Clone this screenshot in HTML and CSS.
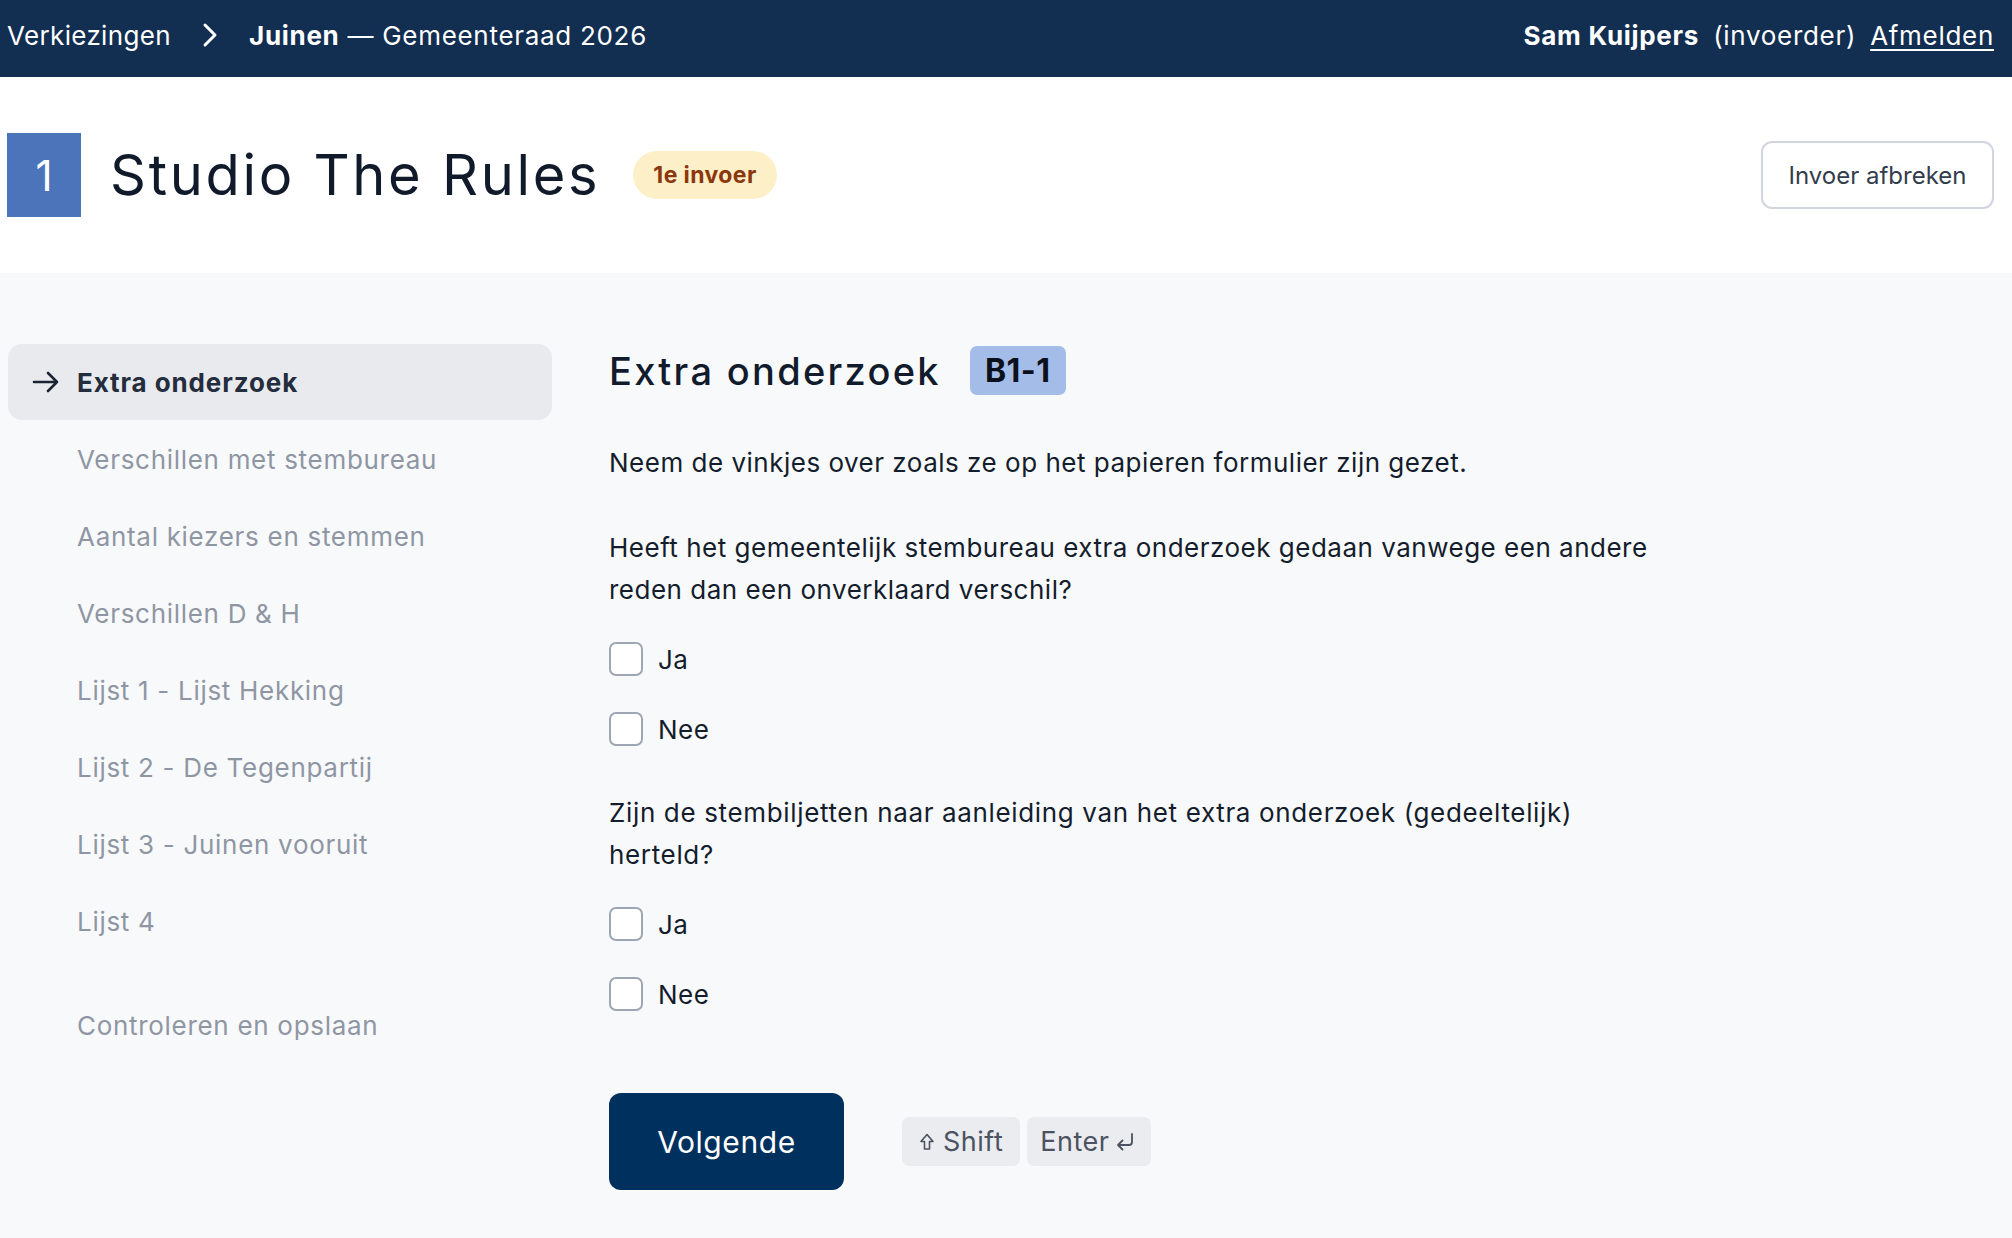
FILE: index.html
```html
<!DOCTYPE html>
<html lang="nl">
<head>
<meta charset="utf-8">
<title>Extra onderzoek</title>
<link rel="stylesheet" href="styles.css">
</head>
<body>
<header class="topbar">
  <nav class="crumbs">
    <span class="crumb first">Verkiezingen</span>
    <svg class="chev" width="18" height="26" viewBox="0 0 18 26"><path d="M4 3 L14 13 L4 23" fill="none" stroke="#fff" stroke-width="3" stroke-linecap="round" stroke-linejoin="round"/></svg>
    <span class="crumb"><strong>Juinen</strong> — Gemeenteraad 2026</span>
  </nav>
  <div class="user">
    <strong>Sam Kuijpers</strong>
    <span class="role">(invoerder)</span>
    <a class="logout" href="#">Afmelden</a>
  </div>
</header>

<section class="titlebar">
  <div class="titleleft">
    <div class="num">1</div>
    <h1 class="title">Studio The Rules</h1>
    <span class="pill">1e invoer</span>
  </div>
  <button class="btn-outline">Invoer afbreken</button>
</section>

<main class="main">
  <aside class="side">
    <ul class="navlist">
      <li class="navitem active"><span class="ico"><svg width="28" height="22" viewBox="0 0 28 22"><path d="M2 11 H25 M16 2 L25 11 L16 20" fill="none" stroke="#1b2433" stroke-width="2.6" stroke-linecap="round" stroke-linejoin="round"/></svg></span>Extra onderzoek</li>
      <li class="navitem"><span class="ico"></span>Verschillen met stembureau</li>
      <li class="navitem"><span class="ico"></span>Aantal kiezers en stemmen</li>
      <li class="navitem"><span class="ico"></span>Verschillen D &amp; H</li>
      <li class="navitem"><span class="ico"></span>Lijst 1 - Lijst Hekking</li>
      <li class="navitem"><span class="ico"></span>Lijst 2 - De Tegenpartij</li>
      <li class="navitem"><span class="ico"></span>Lijst 3 - Juinen vooruit</li>
      <li class="navitem"><span class="ico"></span>Lijst 4</li>
      <li class="navitem final"><span class="ico"></span>Controleren en opslaan</li>
    </ul>
  </aside>

  <section class="content">
    <div class="heading">
      <h2 class="h2">Extra onderzoek</h2>
      <span class="code">B1-1</span>
    </div>
    <p class="intro">Neem de vinkjes over zoals ze op het papieren formulier zijn gezet.</p>

    <p class="question">Heeft het gemeentelijk stembureau extra onderzoek gedaan vanwege een andere<br>reden dan een onverklaard verschil?</p>
    <label class="check first"><span class="box"></span>Ja</label>
    <label class="check"><span class="box"></span>Nee</label>

    <p class="question q2">Zijn de stembiljetten naar aanleiding van het extra onderzoek (gedeeltelijk)<br>herteld?</p>
    <label class="check first"><span class="box"></span>Ja</label>
    <label class="check"><span class="box"></span>Nee</label>

    <div class="actions">
      <button class="btn-primary">Volgende</button>
      <div class="keys">
        <span class="kbd"><svg width="16" height="20" viewBox="0 0 16 20"><path d="M8 2.5 L14 9.5 H10.5 V17 H5.5 V9.5 H2 Z" fill="none" stroke="#4b5261" stroke-width="1.6" stroke-linejoin="round"/></svg>Shift</span>
        <span class="kbd enter">Enter<svg width="24" height="22" viewBox="0 0 24 22"><path d="M19 3 V11 Q19 14 16 14 H5 M9.5 9.5 L5 14 L9.5 18.5" fill="none" stroke="#4b5261" stroke-width="1.8" stroke-linecap="round" stroke-linejoin="round"/></svg></span>
      </div>
    </div>
  </section>
</main>
</body>
</html>
```
FILE: styles.css
```css
* { box-sizing: border-box; }
html, body { margin: 0; padding: 0; }
body {
  font-family: "Inter", "Noto Sans", sans-serif;
  background: #f8f9fb;
  color: #0f1a2c;
  width: 2012px;
  min-height: 1238px;
}

.topbar {
  height: 77px;
  background: #122e51;
  color: #fff;
  display: flex;
  align-items: center;
  justify-content: space-between;
  padding: 0 18px 7px 7px;
  font-size: 26px;
  letter-spacing: 0.7px;
}
.crumbs { display: flex; align-items: center; gap: 30px; }
.crumb.first { letter-spacing: 0.35px; }
.crumb strong { font-weight: 700; }
.chev { display: block; }
.user { display: flex; align-items: center; gap: 14px; }
.user strong { font-weight: 700; }
.logout { color: #fff; text-decoration: underline; text-underline-offset: 4px; text-decoration-thickness: 2px; }

.titlebar {
  height: 196px;
  background: #fff;
  display: flex;
  align-items: center;
  justify-content: space-between;
  padding: 0 18px 0 7px;
}
.titleleft { display: flex; align-items: center; }
.num {
  width: 74px;
  height: 84px;
  background: #4b74bb;
  color: #fff;
  font-size: 42px;
  display: flex;
  align-items: center;
  justify-content: center;
}
.title {
  margin: 0 0 0 29px;
  font-size: 56px;
  font-weight: 400;
  color: #101a2b;
  letter-spacing: 2.7px;
}
.pill {
  margin-left: 33px;
  height: 48px;
  padding: 0 20px;
  border-radius: 24px;
  background: #fdf0c8;
  color: #8c360d;
  font-weight: 700;
  font-size: 23px;
  letter-spacing: 0.4px;
  display: flex;
  align-items: center;
}
.btn-outline {
  font-family: inherit;
  height: 68px;
  width: 233px;
  background: #fff;
  border: 2px solid #d1d5de;
  border-radius: 11px;
  color: #333c4c;
  font-size: 24px;
}

.main {
  display: flex;
  padding: 71px 0 40px 8px;
}
.side { width: 544px; flex: none; }
.navlist { list-style: none; margin: 0; padding: 0; }
.navitem {
  height: 76px;
  margin-bottom: 1px;
  display: flex;
  align-items: center;
  padding-left: 24px;
  font-size: 26px;
  letter-spacing: 0.7px;
  color: #8f96a3;
  border-radius: 14px;
}
.navitem .ico { width: 45px; flex: none; display: flex; align-items: center; }
.navitem.active {
  background: #e9eaee;
  color: #232d3d;
  font-weight: 700;
  letter-spacing: 0.9px;
}
.navitem.final { margin-top: 28px; }

.content { margin-left: 57px; width: 1100px; }
.heading { display: flex; align-items: center; height: 49px; margin-top: 2px; }
.h2 {
  margin: 0;
  font-size: 38px;
  font-weight: 500;
  letter-spacing: 2.3px;
  color: #111b2c;
}
.code {
  margin-left: 29px;
  height: 49px;
  padding: 0 15px;
  display: flex;
  align-items: center;
  background: #a4bde8;
  border-radius: 7px;
  font-weight: 700;
  font-size: 32px;
  letter-spacing: 0.5px;
  color: #0b111c;
}
.intro, .question {
  margin: 0;
  font-size: 26px;
  line-height: 42px;
  letter-spacing: 0.5px;
  color: #141d2c;
}
.intro { margin-top: 47px; }
.question { margin-top: 43px; }
.question.q2 { margin-top: 42px; letter-spacing: 0.65px; }
.check {
  display: flex;
  align-items: center;
  height: 42px;
  margin-top: 28px;
  font-size: 26px;
  letter-spacing: 0.45px;
  color: #141d2c;
}
.check.first { margin-top: 27px; }
.box {
  width: 34px;
  height: 34px;
  border: 2px solid #9ea6b5;
  border-radius: 7px;
  background: #fff;
  margin-right: 15px;
}
.actions { display: flex; align-items: center; margin-top: 78px; }
.btn-primary {
  font-family: inherit;
  width: 235px;
  height: 97px;
  border: none;
  border-radius: 12px;
  background: #00305e;
  color: #fff;
  font-size: 30px;
  letter-spacing: 0.6px;
}
.keys { display: flex; gap: 7px; margin-left: 58px; }
.kbd {
  height: 49px;
  padding: 0 17px;
  display: flex;
  align-items: center;
  gap: 8px;
  background: #ebecef;
  border-radius: 7px;
  color: #4b5261;
  font-size: 27px;
  letter-spacing: 0.5px;
}
.kbd.enter { gap: 4px; padding: 0 14px 0 13px; }
```
